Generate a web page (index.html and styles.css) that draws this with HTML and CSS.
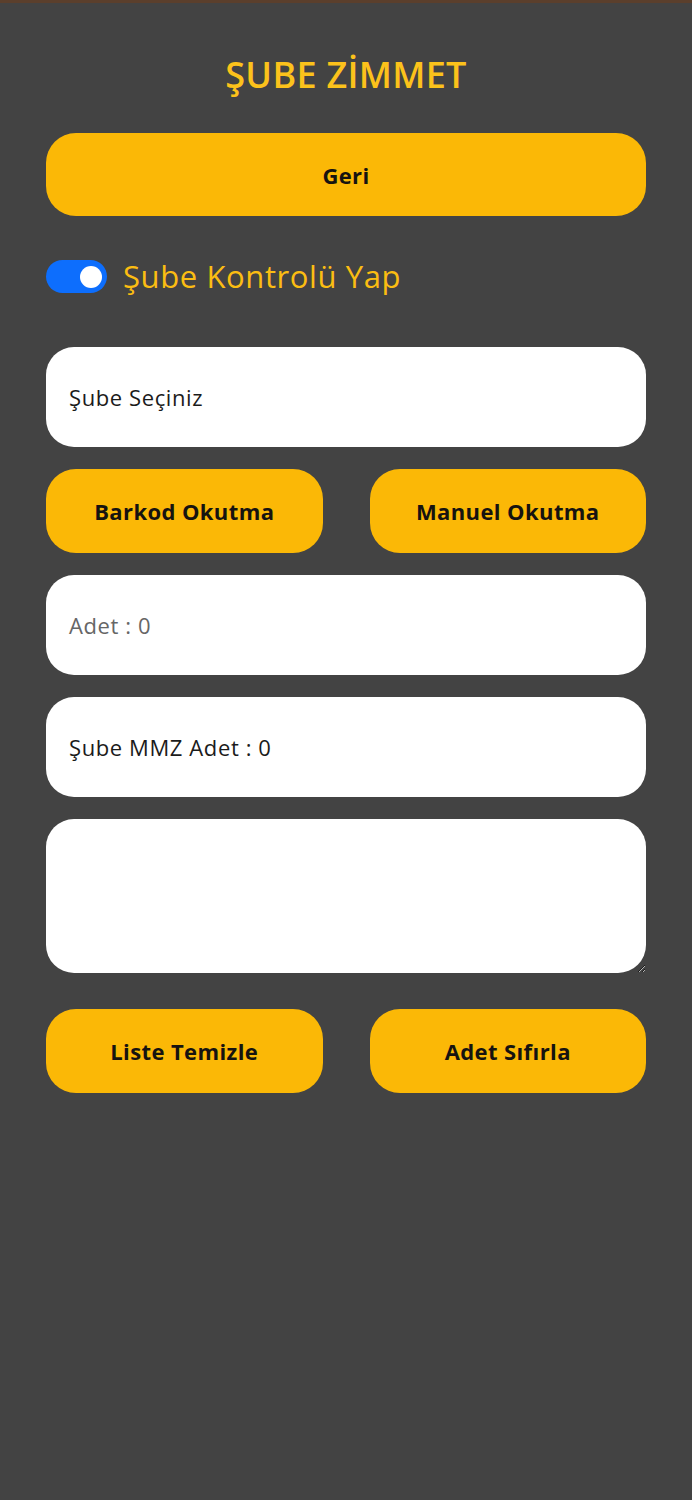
FILE: index.html
```html
<!DOCTYPE html>
<html lang="tr">
<head>
    <meta charset="UTF-8">
    <meta name="viewport" content="width=device-width, initial-scale=1.0">
    <title>Şube Zimmet</title>
    <link rel="stylesheet" href="styles.css">
</head>
<body>
    <div class="container">
        <h1 class="title">ŞUBE ZİMMET</h1>

        <button class="btn btn-back">Geri</button>

        <label class="switch-row">
            <span class="switch"><span class="knob"></span></span>
            <span class="switch-label">Şube Kontrolü Yap</span>
        </label>

        <div class="field">Şube Seçiniz</div>

        <div class="btn-row">
            <button class="btn">Barkod Okutma</button>
            <button class="btn">Manuel Okutma</button>
        </div>

        <div class="field field-muted">Adet : 0</div>
        <div class="field">Şube MMZ Adet : 0</div>

        <textarea class="list-box"></textarea>

        <div class="btn-row btn-row-bottom">
            <button class="btn">Liste Temizle</button>
            <button class="btn">Adet Sıfırla</button>
        </div>
    </div>
</body>
</html>
```

FILE: styles.css
```css
* {
    margin: 0;
    padding: 0;
    box-sizing: border-box;
}
body {
    background-color: #434343;
    border-top: 3px solid #5b3f2c;
    font-family: "Open Sans", "Noto Sans", sans-serif;
    min-height: 100vh;
}
.container {
    padding: 0 46px 40px 46px;
    display: flex;
    flex-direction: column;
    gap: 22px;
}
.title {
    margin-top: 50px;
    margin-bottom: 14px;
    text-align: center;
    color: #fcc21b;
    font-size: 36px;
    line-height: 44px;
    font-weight: 600;
    letter-spacing: 0.3px;
}
.btn {
    height: 84px;
    width: 100%;
    background: #fbb806;
    color: #161310;
    border: none;
    border-radius: 30px;
    font-family: inherit;
    font-size: 22px;
    font-weight: 700;
    letter-spacing: 0.4px;
    cursor: pointer;
}
.btn-back {
    height: 83px;
}
.switch-row {
    margin-top: 22px;
    margin-bottom: 32px;
    display: flex;
    align-items: center;
    gap: 16px;
    height: 33px;
}
.switch {
    width: 61px;
    height: 33px;
    border-radius: 17px;
    background: #0d6efd;
    display: flex;
    align-items: center;
    justify-content: flex-end;
    padding-right: 5px;
}
.knob {
    width: 22px;
    height: 22px;
    border-radius: 50%;
    background: #fff;
}
.switch-label {
    color: #fbbd12;
    font-size: 31px;
    line-height: 33px;
    font-weight: 400;
    letter-spacing: 0.6px;
}
.field {
    height: 100px;
    background: #fff;
    border-radius: 28px;
    display: flex;
    align-items: center;
    padding-left: 23px;
    font-size: 22px;
    letter-spacing: 0.6px;
    color: #1b1b1b;
}
.field-muted {
    color: #666;
}
.btn-row {
    display: grid;
    grid-template-columns: 1fr 1fr;
    column-gap: 47px;
}
.list-box {
    height: 154px;
    background: #fff;
    border: none;
    border-radius: 28px;
    resize: vertical;
    outline: none;
}
.btn-row-bottom {
    margin-top: 14px;
}
```
